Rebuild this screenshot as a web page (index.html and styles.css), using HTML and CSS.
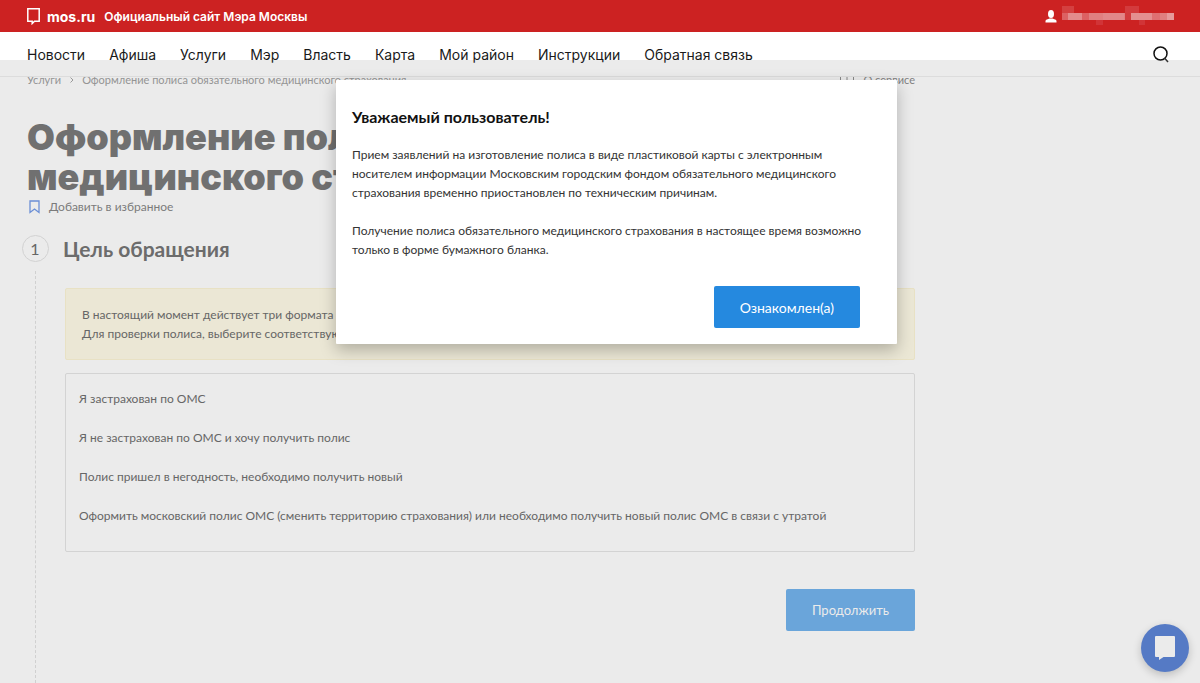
FILE: index.html
```html
<!DOCTYPE html>
<html lang="ru">
<head>
<meta charset="utf-8">
<meta name="viewport" content="width=device-width, initial-scale=1">
<title>Оформление полиса обязательного медицинского страхования</title>
<link rel="stylesheet" href="styles.css">
</head>
<body>
<header class="header">
  <div class="topbar">
    <a class="brand" href="#">
      <svg class="brand-mark" viewBox="0 0 13 17" aria-hidden="true"><path d="M.8 .8h11.400v12.400H7.500L5.200 15.500v-2.300H.8z" fill="none" stroke="#fff" stroke-width="1.500"/></svg>
      <span class="brand-name">mos.ru</span>
      <span class="brand-title">Официальный сайт Мэра Москвы</span>
    </a>
    <a class="user" href="#" aria-label="Профиль">
      <svg class="user-icon" viewBox="0 0 12 13" aria-hidden="true"><ellipse cx="6" cy="4" rx="3" ry="4" fill="#fff"/><path d="M.5 12.500V11C.5 9.500 3 9 4.500 8.500h3C9 9 11.500 9.500 11.500 11v1.500z" fill="#fff"/></svg>
      <svg class="user-name" viewBox="0 0 112 20" shape-rendering="crispEdges" aria-hidden="true">
        <path d="M0 0h12v7H0z" fill="#d44040"/><path d="M63 0h14v7H63z" fill="#d33b3d"/>
        <path d="M0 7h112v7H0z" fill="#e07f80"/>
        <path d="M0 7h6v7H0zM20 7h7v7h-7z" fill="#dc6163"/><path d="M6 7h14v7H6z" fill="#e38b8c"/>
        <path d="M41 7h21v7H41z" fill="#e28789"/><path d="M63 7h6v7h-6z" fill="#d23a3c"/>
        <path d="M69 7h21v7H69z" fill="#e48f90"/><path d="M90 7h8v7h-8z" fill="#df7072"/><path d="M105 7h7v7h-7z" fill="#e69a9b"/>
        <path d="M34 14h7v5h-7zM77 14h6v5h-6z" fill="#d13437"/>
      </svg>
    </a>
  </div>
  <nav class="nav">
    <div class="nav-links">
      <a href="#">Новости</a><a href="#">Афиша</a><a href="#">Услуги</a><a href="#">Мэр</a><a href="#">Власть</a><a href="#">Карта</a><a href="#">Мой район</a><a href="#">Инструкции</a><a href="#">Обратная связь</a>
    </div>
    <button class="search" aria-label="Поиск"><svg viewBox="0 0 16 17" aria-hidden="true"><circle cx="7.500" cy="7.500" r="6.500" fill="none" stroke="#111" stroke-width="1.500"/><path d="M11.500 12l3.500 4" stroke="#333" stroke-width="1.500"/></svg></button>
  </nav>
</header>

<main class="page">
  <div class="crumbs">
    <div class="crumb-path"><a href="#">Услуги</a><svg class="chevron" viewBox="0 0 4 6" aria-hidden="true"><path d="M.5 .5L3 3 .5 5.500" fill="none" stroke="#999"/></svg><span>Оформление полиса обязательного медицинского страхования</span></div>
    <a class="about" href="#"><svg viewBox="0 0 14 12" aria-hidden="true"><path d="M.5 0v11.500h13V0M7 1v8M5.500 2.500L7 1" fill="none" stroke="#888"/></svg>О сервисе</a>
  </div>
  <h1 class="title">Оформление полиса обязательного<br>медицинского страхования</h1>
  <button class="favorite"><svg viewBox="0 0 11 14" aria-hidden="true"><path d="M1 1h9v11.500L5.500 9 1 12.500z" fill="none" stroke="#6b8fd6" stroke-width="1.300"/></svg>Добавить в избранное</button>

  <section class="step">
    <div class="rail"><span class="number">1</span></div>
    <div class="step-body">
      <h2 class="step-title">Цель обращения</h2>
      <div class="notice">
        <p>В настоящий момент действует три формата полиса</p>
        <p>Для проверки полиса, выберите соответствующий формат</p>
      </div>
      <div class="options">
        <button>Я застрахован по ОМС</button>
        <button>Я не застрахован по ОМС и хочу получить полис</button>
        <button>Полис пришел в негодность, необходимо получить новый</button>
        <button>Оформить московский полис ОМС (сменить территорию страхования) или необходимо получить новый полис ОМС в связи с утратой</button>
      </div>
      <button class="primary next">Продолжить</button>
    </div>
  </section>
</main>

<div class="dialog" role="dialog" aria-modal="true" aria-labelledby="dialog-title">
  <h2 class="dialog-title" id="dialog-title">Уважаемый пользователь!</h2>
  <p>Прием заявлений на изготовление полиса в виде пластиковой карты с электронным<br>носителем информации Московским городским фондом обязательного медицинского<br>страхования временно приостановлен по техническим причинам.</p>
  <p>Получение полиса обязательного медицинского страхования в настоящее время возможно<br>только в форме бумажного бланка.</p>
  <button class="primary confirm">Ознакомлен(а)</button>
</div>

<button class="chat" aria-label="Чат"><svg viewBox="0 0 20 24" aria-hidden="true"><path d="M1 0h18q1 0 1 1v19q0 1-1 1H8.500L4 24v-3H1q-1 0-1-1V1q0-1 1-1z" fill="#ebebeb"/></svg></button>
</body>
</html>
```

FILE: styles.css
```css
* { box-sizing: border-box; }

body {
  margin: 0;
  min-height: 100vh;
  display: flex;
  flex-direction: column;
  background: #ebebeb;
  color: #666;
  font: 12px/19px Lato, "Noto Sans", sans-serif;
}

h1, h2, p { margin: 0; }
a { color: inherit; text-decoration: none; }
svg { display: block; }
button { font: inherit; color: inherit; border: 0; padding: 0; background: none; cursor: pointer; }

.header { position: relative; z-index: 1; font-family: Inter, sans-serif; }

.topbar {
  display: flex;
  align-items: center;
  justify-content: space-between;
  height: 32px;
  padding: 0 26px 0 27px;
  background: #cc2222;
  color: #fff;
}
.brand { display: flex; align-items: center; }
.brand-mark { width: 13px; height: 17px; margin-right: 7px; }
.brand-name { font-size: 14px; font-weight: 700; margin-right: 9px; }
.brand-title { font-size: 12px; font-weight: 600; }
.user { display: flex; align-items: center; gap: 5px; }
.user-icon { width: 12px; height: 13px; }
.user-name { width: 112px; height: 20px; }

.nav {
  display: flex;
  align-items: center;
  justify-content: space-between;
  height: 45px;
  padding: 0 31px 0 27px;
  border-bottom: 1px solid #dcdcdc;
  background: linear-gradient(#fff 28px, #ebebeb 28px);
  color: #1a1a1a;
  font-size: 14px;
}
.nav-links { display: flex; gap: 24px; }
.search svg { width: 16px; height: 17px; }

.page {
  flex: 1;
  display: flex;
  flex-direction: column;
  align-items: stretch;
  max-width: 915px;
  padding-left: 27px;
}
.crumbs {
  display: flex;
  justify-content: space-between;
  margin-top: -7px;
  color: #949494;
  font-size: 11px;
}
.crumb-path { display: flex; align-items: center; }
.chevron { width: 4px; height: 6px; margin: 0 8px 0 9px; }
.about { display: flex; align-items: center; gap: 10px; color: #808080; }
.about svg { width: 14px; height: 12px; }

.title {
  margin-top: 28px;
  font: 900 36px/40px Inter, sans-serif;
  color: #707070;
}
.favorite {
  display: flex;
  align-items: center;
  gap: 9px;
  align-self: flex-start;
  padding-left: 2px;
  color: #7b7b7b;
}
.favorite svg { width: 11px; height: 14px; }

.step { flex: 1; display: flex; gap: 16px; margin: 19px 0 0 -6px; }
.rail { display: flex; flex-direction: column; align-items: center; width: 28px; }
.rail::after { content: ""; flex: 1; margin-top: 9px; border-left: 1px dashed #d0d0d0; }
.number {
  width: 27px;
  height: 27px;
  border: 1px solid #d2d2d2;
  border-radius: 50%;
  font-size: 16px;
  line-height: 25px;
  text-align: center;
}
.step-body { flex: 1; display: flex; flex-direction: column; min-width: 0; }
.step-title { margin-left: -2px; font-size: 21px; line-height: 27px; color: #6c6c6c; }
.notice {
  margin-top: 26px;
  padding: 16px;
  border: 1px solid #e8e1c4;
  border-radius: 2px;
  background: #ebe7d5;
}
.options {
  display: flex;
  flex-direction: column;
  align-items: flex-start;
  gap: 20px;
  margin-top: 13px;
  padding: 15px 13px 26px;
  border: 1px solid #d3d3d3;
  border-radius: 2px;
}
.options button { text-align: left; }

.primary {
  height: 42px;
  padding: 0 26px;
  border-radius: 2px;
  background: #2589df;
  color: #fff;
  font-size: 14px;
}
.next { align-self: flex-end; margin-top: 37px; background: #6aa5da; color: #ebebeb; font-size: 13px; }

.dialog {
  position: absolute;
  z-index: 2;
  top: 80px;
  left: 28%;
  display: flex;
  flex-direction: column;
  gap: 19px;
  width: 561px;
  padding: 27px 16px 16px;
  border-radius: 1px;
  background: #fff;
  box-shadow: 0 6px 16px rgba(0, 0, 0, 0.25);
  color: #333;
}
.dialog-title { font-size: 16px; line-height: 19px; color: #111; }
.confirm { align-self: flex-end; margin: 8px 21px 0 0; }

.chat {
  position: fixed;
  right: 11px;
  bottom: 11px;
  display: grid;
  place-items: center;
  width: 48px;
  height: 48px;
  border-radius: 50%;
  background: #557ac5;
  box-shadow: 0 3px 8px rgba(0, 0, 0, 0.2);
}
.chat svg { width: 20px; height: 24px; }
```
